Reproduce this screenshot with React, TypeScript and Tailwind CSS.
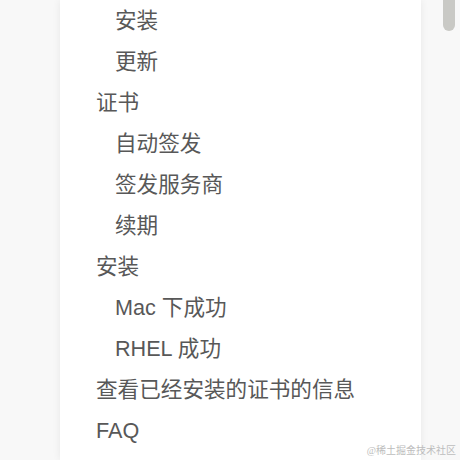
import React from 'react';

type TocItem = { label: string; level: 1 | 2 };

const items: TocItem[] = [
  { label: '安装', level: 2 },
  { label: '更新', level: 2 },
  { label: '证书', level: 1 },
  { label: '自动签发', level: 2 },
  { label: '签发服务商', level: 2 },
  { label: '续期', level: 2 },
  { label: '安装', level: 1 },
  { label: 'Mac 下成功', level: 2 },
  { label: 'RHEL 成功', level: 2 },
  { label: '查看已经安装的证书的信息', level: 1 },
  { label: 'FAQ', level: 1 },
];

const App: React.FC = () => {
  return (
    <div className="relative flex h-[460px] w-[460px] overflow-hidden bg-[#f8f8f8] font-['Liberation_Sans','Noto_Sans_CJK_SC',sans-serif]">
      <div className="w-[60px] shrink-0" />

      {/* table of contents panel */}
      <div className="w-[361px] shrink-0 bg-white pl-[36px] shadow-[0_0_8px_rgba(0,0,0,0.07)]">
        <ul>
          {items.map((item, i) => (
            <li
              key={i}
              className={`h-[41px] text-[21.6px] leading-[41px] text-[#585858] whitespace-nowrap ${
                item.level === 2 ? 'pl-[19px]' : ''
              }`}
            >
              {item.label}
            </li>
          ))}
        </ul>
      </div>

      {/* scrollbar gutter */}
      <div className="flex flex-1 justify-end pr-[5px]">
        <div className="h-[31px] w-[12px] rounded-b-full bg-[#c9c9c5]" />
      </div>

      <span className="absolute bottom-[2px] right-[4px] text-[10px] text-[#bdbdbd] font-['Liberation_Serif','Noto_Sans_CJK_SC',serif]">
        @稀土掘金技术社区
      </span>
    </div>
  );
};

export default App;
